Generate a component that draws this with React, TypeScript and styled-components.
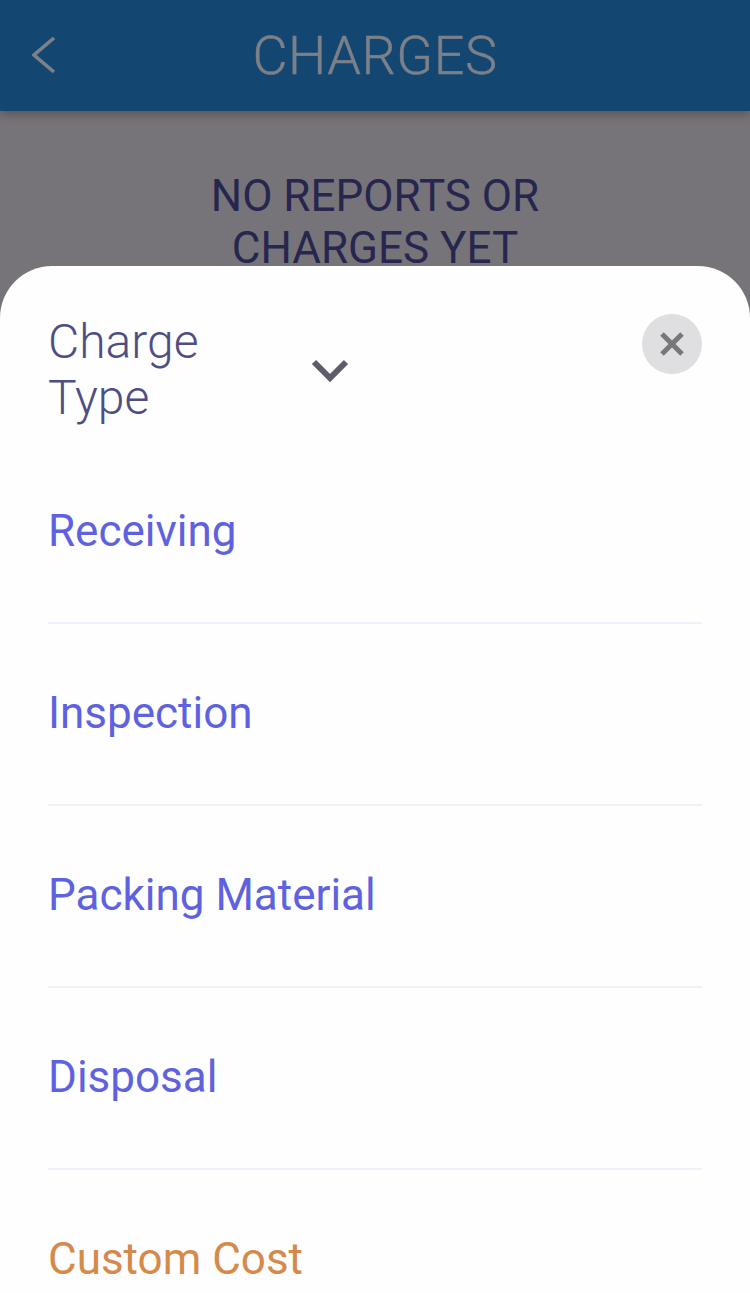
import React from "react";
import styled, { createGlobalStyle } from "styled-components";

const GlobalStyle = createGlobalStyle`
  html, body {
    margin: 0;
    padding: 0;
    background: #767478;
  }
  * {
    box-sizing: border-box;
  }
`;

const Screen = styled.div`
  position: relative;
  width: 750px;
  height: 1293px;
  overflow: hidden;
  background: #767478;
  font-family: Roboto, "Liberation Sans", sans-serif;
`;

const Header = styled.header`
  position: relative;
  display: flex;
  align-items: center;
  justify-content: center;
  height: 111px;
  background: #144672;
  box-shadow: 0 3px 10px rgba(0, 0, 0, 0.3);
`;

const BackButton = styled.button`
  position: absolute;
  left: 32px;
  top: 37px;
  width: 24px;
  height: 38px;
  padding: 0;
  border: 0;
  background: none;
  display: block;
`;

const Title = styled.h1`
  margin: 0;
  font-size: 54px;
  letter-spacing: 0.5px;
  font-weight: 300;
  -webkit-text-stroke: 0.4px #7c8088;
  color: #7c8088;
`;

const EmptyMessage = styled.p`
  margin: 59px 0 0;
  text-align: center;
  font-size: 44px;
  line-height: 52px;
  font-weight: 400;
  color: #27264f;
`;

const Sheet = styled.section`
  position: absolute;
  left: 0;
  right: 0;
  top: 266px;
  bottom: 0;
  padding: 48px 48px 0 49px;
  background: #fefefe;
  border-radius: 52px 52px 0 0;
`;

const SheetHead = styled.div`
  display: flex;
  align-items: flex-start;
  height: 128px;
`;

const SheetTitle = styled.h2`
  margin: 0 0 0 -1px;
  width: 161px;
  font-size: 48px;
  line-height: 56px;
  font-weight: 300;
  color: #4f4e84;
`;

const Chevron = styled.svg`
  margin: 44px 0 0 102px;
  width: 38px;
  height: 24px;
`;

const CloseButton = styled.button`
  display: flex;
  align-items: center;
  justify-content: center;
  margin-left: auto;
  width: 60px;
  height: 60px;
  padding: 0;
  border: 0;
  border-radius: 50%;
  background: #dfdee0;
`;

const OptionList = styled.ul`
  margin: 0;
  padding: 0;
  list-style: none;
`;

const Option = styled.li<{ $accent?: boolean }>`
  height: 182px;
  padding-top: 61px;
  margin-left: -1px;
  border-bottom: 2px solid ${(p) => (p.$accent ? "transparent" : "#f0f0fb")};
  font-size: 44px;
  line-height: 56px;
  color: ${(p) => (p.$accent ? "#d5894a" : "#5f62e0")};
`;

const options = ["Receiving", "Inspection", "Packing Material", "Disposal"];

export default function App() {
  return (
    <Screen>
      <GlobalStyle />
      <Header>
        <BackButton aria-label="Back">
          <svg width="24" height="38" viewBox="0 0 24 38" fill="none">
            <path d="M22 1 L2 18 L22 35" stroke="#7c8088" strokeWidth="3.6" />
          </svg>
        </BackButton>
        <Title>CHARGES</Title>
      </Header>
      <EmptyMessage>
        NO REPORTS OR
        <br />
        CHARGES YET
      </EmptyMessage>
      <Sheet>
        <SheetHead>
          <SheetTitle>Charge Type</SheetTitle>
          <Chevron viewBox="0 0 38 24" fill="none">
            <path d="M3 4 L19 20 L35 4" stroke="#5c5d68" strokeWidth="6" />
          </Chevron>
          <CloseButton aria-label="Close">
            <svg width="26" height="26" viewBox="0 0 26 26" fill="none">
              <path d="M3 3 L23 23 M23 3 L3 23" stroke="#77767b" strokeWidth="5" />
            </svg>
          </CloseButton>
        </SheetHead>
        <OptionList>
          {options.map((label) => (
            <Option key={label}>{label}</Option>
          ))}
          <Option $accent>Custom Cost</Option>
        </OptionList>
      </Sheet>
    </Screen>
  );
}
